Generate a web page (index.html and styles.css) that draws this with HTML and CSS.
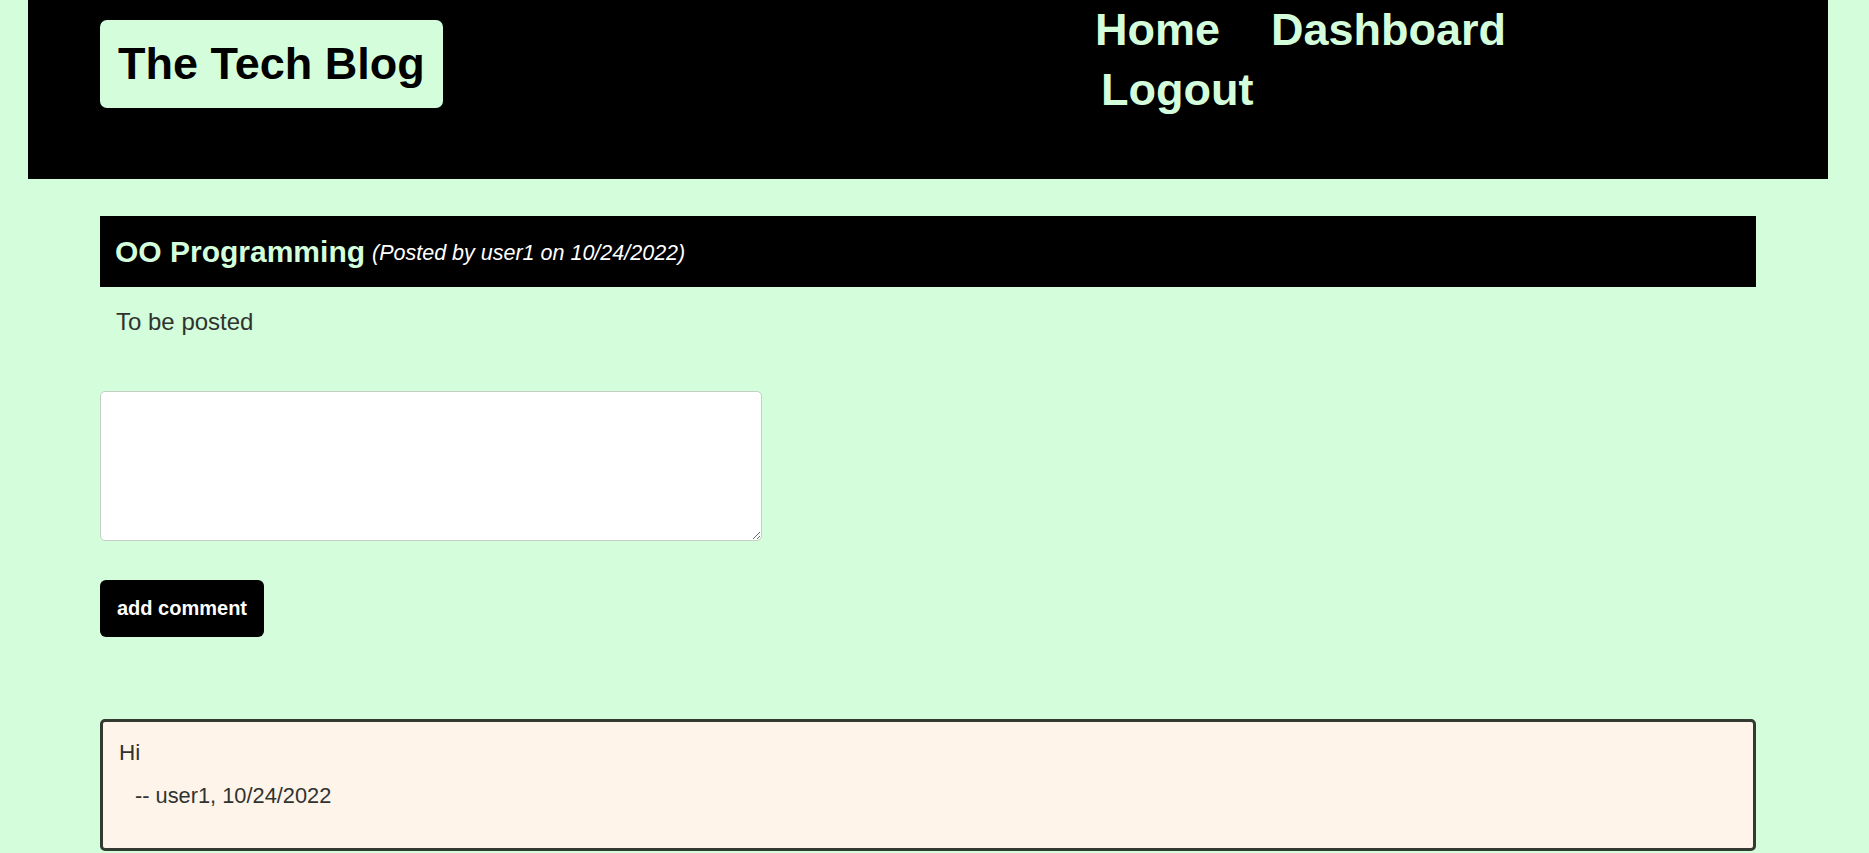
FILE: index.html
```html
<!DOCTYPE html>
<html lang="en">
<head>
<meta charset="utf-8">
<title>The Tech Blog</title>
<link rel="stylesheet" href="styles.css">
</head>
<body>
<div class="page">
  <header class="site-header">
    <a class="logo" href="#">The Tech Blog</a>
    <nav class="nav">
      <a class="nav-link" href="#">Home</a>
      <a class="nav-link" href="#">Dashboard</a>
      <a class="nav-link nav-link-wrap" href="#">Logout</a>
    </nav>
  </header>
  <main class="main">
    <article class="post">
      <div class="post-head">
        <h2 class="post-title">OO Programming</h2>
        <span class="post-meta">(Posted by user1 on 10/24/2022)</span>
      </div>
      <p class="post-body">To be posted</p>
    </article>
    <form class="comment-form">
      <textarea class="comment-input"></textarea>
      <button class="btn" type="button">add comment</button>
    </form>
    <section class="comments">
      <div class="comment">
        <p class="comment-text">Hi</p>
        <p class="comment-meta">-- user1, 10/24/2022</p>
      </div>
    </section>
  </main>
</div>
</body>
</html>
```
FILE: styles.css
```css
html, body {
  margin: 0;
  padding: 0;
  background: #d4fedb;
}
body {
  font-family: "Liberation Sans", Arial, sans-serif;
  font-size: 22.5px;
  color: #303330;
}
.page {
  margin: 0 41px 0 28px;
}
.site-header {
  background: #000;
  height: 179px;
  box-sizing: border-box;
  padding: 0 72px;
  display: flex;
  align-items: flex-start;
}
.logo {
  margin-top: 20px;
  background: #d4fedb;
  color: #000;
  text-decoration: none;
  font-weight: bold;
  font-size: 45px;
  padding: 18px 18px;
  border-radius: 7px;
  line-height: 52px;
}
.nav {
  margin-left: auto;
  margin-right: 181px;
  margin-top: 4px;
  width: 480px;
  display: flex;
  flex-wrap: wrap;
  column-gap: 51px;
  row-gap: 8px;
}
.nav-link {
  color: #d4fedb;
  text-decoration: none;
  font-weight: bold;
  font-size: 45px;
  line-height: 52px;
}
.nav-link-wrap {
  margin-left: 6px;
}
.main {
  padding: 37px 72px 0;
}
.post-head {
  background: #000;
  height: 71px;
  box-sizing: border-box;
  padding: 0 15px;
  display: flex;
  align-items: center;
  gap: 7px;
}
.post-title {
  margin: 0;
  font-size: 30px;
  font-weight: bold;
  color: #d4fedb;
}
.post-meta {
  color: #fff;
  font-style: italic;
  font-size: 21.5px;
  padding-top: 4px;
}
.post-body {
  margin: 21px 0 0;
  padding-left: 16px;
  font-size: 24px;
}
.comment-form {
  margin-top: 55px;
  display: flex;
  flex-direction: column;
  align-items: flex-start;
}
.comment-input {
  width: 662px;
  height: 150px;
  box-sizing: border-box;
  border: 1px solid #c3cfc5;
  border-radius: 5px;
  background: #fff;
  margin: 0;
  font-family: inherit;
  font-size: 20px;
}
.btn {
  margin-top: 39px;
  background: #000;
  color: #fff;
  border: none;
  border-radius: 6px;
  font-family: inherit;
  font-weight: bold;
  font-size: 20px;
  padding: 16px 17px;
  line-height: 25px;
  cursor: pointer;
}
.comments {
  margin-top: 82px;
}
.comment {
  background: #fff4ea;
  border: 3px solid #323a32;
  border-radius: 5px;
  padding: 18px 16px 0;
}
.comment-text {
  margin: 0 0 17px;
}
.comment-meta {
  margin: 0;
  padding: 0 0 39px 16px;
  font-size: 21.8px;
}
```
